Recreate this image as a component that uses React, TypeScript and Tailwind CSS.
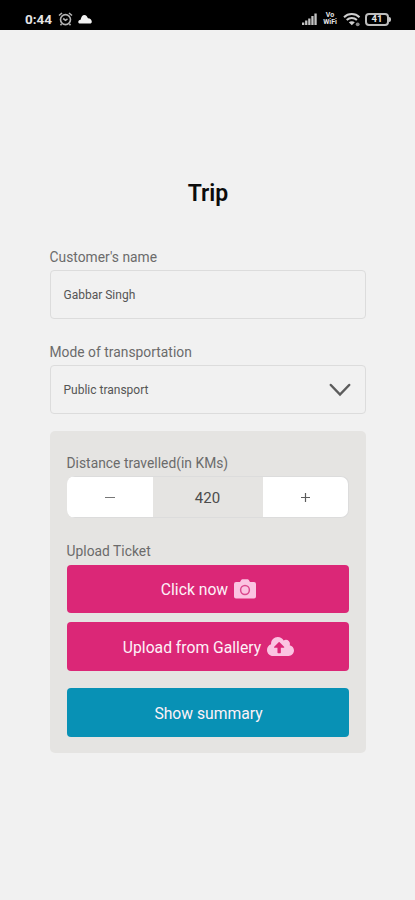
import type { ReactNode } from "react";
import { FaCloudUploadAlt } from "react-icons/fa";

const ui = {
  label: "text-[13.800px] leading-5 tracking-[0.03px] text-[#6b6b6b]",
  field:
    "flex h-[49px] items-center justify-between rounded-[4px] border border-[#dcdcdc] px-[13px] text-[12px] text-[#555555]",
  button:
    "flex w-full items-center justify-center rounded-[4px] pt-[2px] pl-[2px] text-[15.700px] text-[#fdf2f8]",
};

function CameraIcon() {
  return (
    <svg className="mb-[3px] ml-[6px] h-[20px] w-[22px]" viewBox="0 0 22 20">
      <path
        d="M2 3h4l1.200-2Q7.600.3 8.400.3h5.200q.8 0 1.200.7L16 3h4q2 0 2 2v12.500q0 2-2 2H2q-2 0-2-2V5q0-2 2-2Z"
        fill="#fbc4e2"
      />
      <circle cx="11" cy="11" r="4.400" fill="none" stroke="#db4a8f" strokeWidth="1.500" />
    </svg>
  );
}

function StatusBar() {
  return (
    <header className="flex h-[30px] items-center justify-between bg-black pt-[8px] pr-6 pl-[25px] text-[#e4e4e4]">
      <div className="flex items-center">
        <span className="w-[28px] text-[13.500px] leading-4 font-bold">0:44</span>
        <svg className="ml-[5px] h-[14px] w-[15px]" viewBox="0 0 15 14" fill="none" stroke="#b4b4b4" strokeWidth="1.600">
          <circle cx="7.500" cy="7.600" r="5" />
          <path d="M1 3.500 4 1M14 3.500 11 1M3.500 12 2.500 13.300M11.500 12l1 1.300M5.200 6.500l2.300 1.800 2-1.400" />
        </svg>
        <svg className="ml-[5px] h-[10px] w-[14px]" viewBox="0 0 14 10" fill="#f2f2f2">
          <path d="M2.500 9.500C1 9.500 .3 8.900 .3 7.900c0-1.300 1-1.900 2.300-2.200C3.300 2.800 4.400 .9 6.300 .9c2 0 3 1.700 3.700 3.400 2.300 0 3.800 1.700 3.800 3.400 0 1.200-.8 1.800-1.800 1.800Z" />
        </svg>
      </div>
      <div className="flex items-center">
        <svg className="h-[12px] w-[15px]" viewBox="0 0 15 12" fill="#c4c4c4">
          <path d="M0 9.500h2.300V12H0zM3.100 7.500h2.300V12H3.100zM6.200 5.500h2.300V12H6.200zM9.300 3h2.300v9H9.300zM12.400 .5h2.300V12h-2.300z" />
        </svg>
        <div className="ml-[5px] flex w-[16px] flex-col items-center text-[7px] font-bold">
          <span className="block h-[7px] leading-[7px]">Vo</span>
          <span className="block h-[7px] leading-[7px]">WiFi</span>
        </div>
        <svg className="ml-[5px] h-[15px] w-[18px]" viewBox="0 0 18 15" fill="none" stroke="#cfcfcf" strokeWidth="2">
          <path d="M1 5.200c4.300-4.200 11.200-4.200 15.500 0M3.700 8c2.900-2.700 7.300-2.700 10.200 0" />
          <path d="M5.800 10.300c1.700-1.500 4.300-1.500 6 0L8.800 13.300Z" fill="#cfcfcf" stroke="none" />
          <circle cx="14.700" cy="12.300" r="1.900" fill="#8a8a8a" stroke="none" />
        </svg>
        <div className="ml-[4px] flex h-[13px] w-[24px] items-center justify-center rounded-[4px] border-2 border-[#bdbdbd] text-[9.500px] leading-none font-bold">
          41
        </div>
        <span className="h-[5px] w-[2px] rounded-r bg-[#c8c8c8]" />
      </div>
    </header>
  );
}

function Field({ label, children }: { label: string; children: ReactNode }) {
  return (
    <div>
      <p className={ui.label}>{label}</p>
      <div className={`mt-[3px] ${ui.field}`}>{children}</div>
    </div>
  );
}

export default function App() {
  return (
    <div className="h-[900px] w-full bg-[#f1f1f1] font-[Roboto,sans-serif]">
      <StatusBar />
      <main className="mx-auto w-[316px] pt-[148px]">
        <h1 className="pl-px text-center text-[23px] leading-8 font-semibold text-[#0c0c0c]">
          Trip
        </h1>

        <div className="mt-[37px] flex flex-col gap-[23px]">
          <Field label="Customer's name">
            <span>Gabbar Singh</span>
          </Field>
          <Field label="Mode of transportation">
            <span>Public transport</span>
            <svg className="mr-px h-[14px] w-[22px]" viewBox="0 0 22 14" fill="none" stroke="#5c5c5c" strokeWidth="2.500">
              <path d="m1.800 2 9.200 9.500L20.200 2" strokeLinecap="round" />
            </svg>
          </Field>
        </div>

        <section className="mt-[17px] h-[322px] rounded-[5px] bg-[#e5e4e2] px-[17px] pt-[22px]">
          <p className={ui.label}>Distance travelled(in KMs)</p>
          <div className="mt-[3px] grid h-[42px] grid-cols-[86px_1fr_86px] overflow-hidden rounded-[8px] text-[#4c4c4c] ring-1 ring-[#dcdcdc] ring-inset">
            <button className="flex items-center justify-center border-y border-[#dcdcdc] bg-white">
              <span className="h-px w-[10px] bg-[#777777]" />
            </button>
            <span className="flex items-center justify-center pt-[2px] text-[15px]">420</span>
            <button className="flex items-center justify-center rounded-r-[8px] border-y border-r border-[#dcdcdc] bg-white">
              <svg className="size-[9px]" viewBox="0 0 9 9" stroke="#5c5c5c" strokeWidth="1.200">
                <path d="M0 4.500h9M4.500 0v9" />
              </svg>
            </button>
          </div>

          <p className={`mt-[23px] ${ui.label}`}>Upload Ticket</p>
          <button className={`mt-[4px] h-[48px] bg-[#db2777] ${ui.button}`}>
            Click now
            <CameraIcon />
          </button>
          <button className={`mt-[9px] h-[49px] bg-[#db2777] ${ui.button}`}>
            Upload from Gallery
            <FaCloudUploadAlt className="mb-[2px] ml-[6px] size-[27px] text-[#fbc4e2]" />
          </button>
          <button className={`mt-[17px] h-[49px] bg-[#0891b5] ${ui.button}`}>
            Show summary
          </button>
        </section>
      </main>
    </div>
  );
}
